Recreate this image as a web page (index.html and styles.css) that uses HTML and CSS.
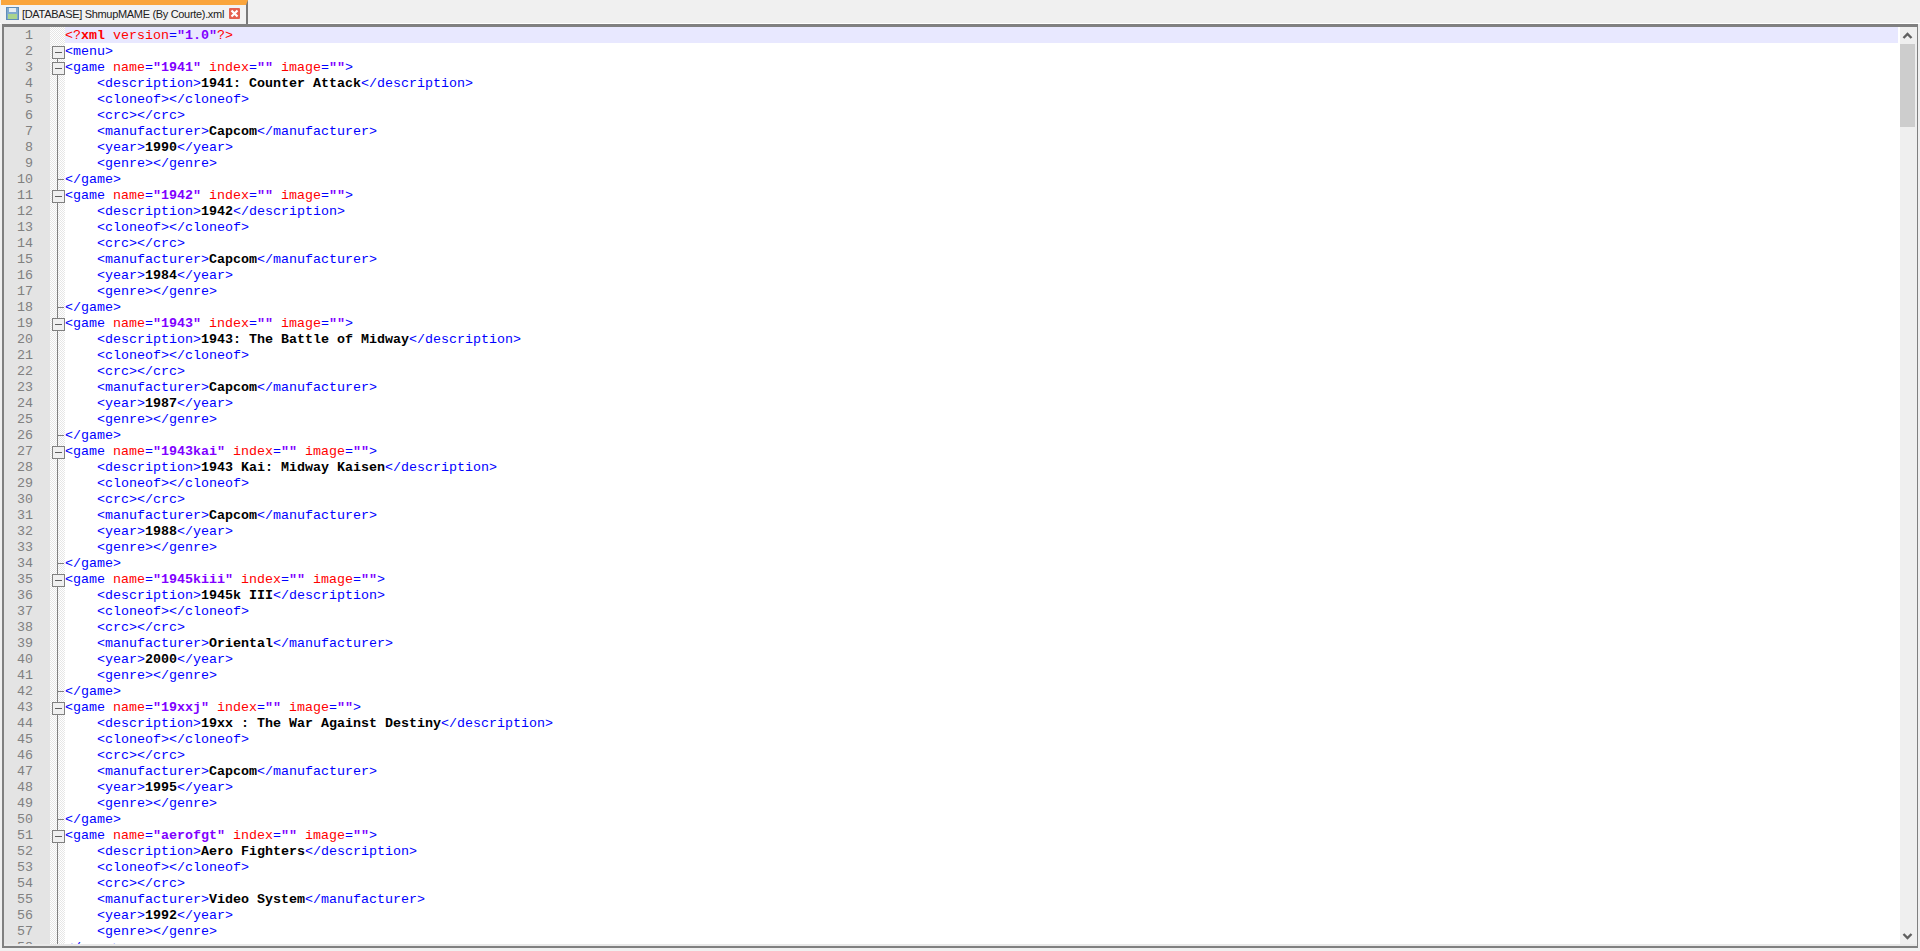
FILE: index.html
```html
<!DOCTYPE html>
<html><head><meta charset="utf-8"><title>ShmupMAME</title><link rel="stylesheet" href="styles.css"></head>
<body>
<div class="tabbar"><div class="tab"><svg class="disk" width="13" height="13" viewBox="0 0 13 13"><rect x="0.5" y="0.5" width="12" height="12" fill="#7fa9cf" stroke="#5f8db8"/><rect x="3" y="1" width="7" height="4" fill="#e6edf3"/><rect x="2" y="7" width="9" height="5" fill="#a9d48d"/></svg><span class="tabname">[DATABASE] ShmupMAME (By Courte).xml</span><svg class="close" width="11" height="11" viewBox="0 0 11 11"><rect width="11" height="11" rx="1" fill="#e5604f"/><path d="M2.5 2.5l6 6M8.5 2.5l-6 6" stroke="#fff" stroke-width="2.2"/></svg></div></div>
<div class="editor"><div class="lines">
<div class="row"><span class="num">1</span><span class="fold none"></span><span class="code cur"><span class="p">&lt;?</span><span class="k">xml</span><span class="a"> version</span><span class="t">=</span><span class="v">"1.0"</span><span class="p">?&gt;</span></span></div>
<div class="row"><span class="num">2</span><span class="fold box first"></span><span class="code"><span class="t">&lt;menu&gt;</span></span></div>
<div class="row"><span class="num">3</span><span class="fold box"></span><span class="code"><span class="t">&lt;game</span><span class="a"> name</span><span class="t">=</span><span class="v">"1941"</span><span class="a"> index</span><span class="t">=</span><span class="v">""</span><span class="a"> image</span><span class="t">=</span><span class="v">""</span><span class="t">&gt;</span></span></div>
<div class="row"><span class="num">4</span><span class="fold"></span><span class="code">    <span class="t">&lt;description&gt;</span><span class="x">1941: Counter Attack</span><span class="t">&lt;/description&gt;</span></span></div>
<div class="row"><span class="num">5</span><span class="fold"></span><span class="code">    <span class="t">&lt;cloneof&gt;&lt;/cloneof&gt;</span></span></div>
<div class="row"><span class="num">6</span><span class="fold"></span><span class="code">    <span class="t">&lt;crc&gt;&lt;/crc&gt;</span></span></div>
<div class="row"><span class="num">7</span><span class="fold"></span><span class="code">    <span class="t">&lt;manufacturer&gt;</span><span class="x">Capcom</span><span class="t">&lt;/manufacturer&gt;</span></span></div>
<div class="row"><span class="num">8</span><span class="fold"></span><span class="code">    <span class="t">&lt;year&gt;</span><span class="x">1990</span><span class="t">&lt;/year&gt;</span></span></div>
<div class="row"><span class="num">9</span><span class="fold"></span><span class="code">    <span class="t">&lt;genre&gt;&lt;/genre&gt;</span></span></div>
<div class="row"><span class="num">10</span><span class="fold end"></span><span class="code"><span class="t">&lt;/game&gt;</span></span></div>
<div class="row"><span class="num">11</span><span class="fold box"></span><span class="code"><span class="t">&lt;game</span><span class="a"> name</span><span class="t">=</span><span class="v">"1942"</span><span class="a"> index</span><span class="t">=</span><span class="v">""</span><span class="a"> image</span><span class="t">=</span><span class="v">""</span><span class="t">&gt;</span></span></div>
<div class="row"><span class="num">12</span><span class="fold"></span><span class="code">    <span class="t">&lt;description&gt;</span><span class="x">1942</span><span class="t">&lt;/description&gt;</span></span></div>
<div class="row"><span class="num">13</span><span class="fold"></span><span class="code">    <span class="t">&lt;cloneof&gt;&lt;/cloneof&gt;</span></span></div>
<div class="row"><span class="num">14</span><span class="fold"></span><span class="code">    <span class="t">&lt;crc&gt;&lt;/crc&gt;</span></span></div>
<div class="row"><span class="num">15</span><span class="fold"></span><span class="code">    <span class="t">&lt;manufacturer&gt;</span><span class="x">Capcom</span><span class="t">&lt;/manufacturer&gt;</span></span></div>
<div class="row"><span class="num">16</span><span class="fold"></span><span class="code">    <span class="t">&lt;year&gt;</span><span class="x">1984</span><span class="t">&lt;/year&gt;</span></span></div>
<div class="row"><span class="num">17</span><span class="fold"></span><span class="code">    <span class="t">&lt;genre&gt;&lt;/genre&gt;</span></span></div>
<div class="row"><span class="num">18</span><span class="fold end"></span><span class="code"><span class="t">&lt;/game&gt;</span></span></div>
<div class="row"><span class="num">19</span><span class="fold box"></span><span class="code"><span class="t">&lt;game</span><span class="a"> name</span><span class="t">=</span><span class="v">"1943"</span><span class="a"> index</span><span class="t">=</span><span class="v">""</span><span class="a"> image</span><span class="t">=</span><span class="v">""</span><span class="t">&gt;</span></span></div>
<div class="row"><span class="num">20</span><span class="fold"></span><span class="code">    <span class="t">&lt;description&gt;</span><span class="x">1943: The Battle of Midway</span><span class="t">&lt;/description&gt;</span></span></div>
<div class="row"><span class="num">21</span><span class="fold"></span><span class="code">    <span class="t">&lt;cloneof&gt;&lt;/cloneof&gt;</span></span></div>
<div class="row"><span class="num">22</span><span class="fold"></span><span class="code">    <span class="t">&lt;crc&gt;&lt;/crc&gt;</span></span></div>
<div class="row"><span class="num">23</span><span class="fold"></span><span class="code">    <span class="t">&lt;manufacturer&gt;</span><span class="x">Capcom</span><span class="t">&lt;/manufacturer&gt;</span></span></div>
<div class="row"><span class="num">24</span><span class="fold"></span><span class="code">    <span class="t">&lt;year&gt;</span><span class="x">1987</span><span class="t">&lt;/year&gt;</span></span></div>
<div class="row"><span class="num">25</span><span class="fold"></span><span class="code">    <span class="t">&lt;genre&gt;&lt;/genre&gt;</span></span></div>
<div class="row"><span class="num">26</span><span class="fold end"></span><span class="code"><span class="t">&lt;/game&gt;</span></span></div>
<div class="row"><span class="num">27</span><span class="fold box"></span><span class="code"><span class="t">&lt;game</span><span class="a"> name</span><span class="t">=</span><span class="v">"1943kai"</span><span class="a"> index</span><span class="t">=</span><span class="v">""</span><span class="a"> image</span><span class="t">=</span><span class="v">""</span><span class="t">&gt;</span></span></div>
<div class="row"><span class="num">28</span><span class="fold"></span><span class="code">    <span class="t">&lt;description&gt;</span><span class="x">1943 Kai: Midway Kaisen</span><span class="t">&lt;/description&gt;</span></span></div>
<div class="row"><span class="num">29</span><span class="fold"></span><span class="code">    <span class="t">&lt;cloneof&gt;&lt;/cloneof&gt;</span></span></div>
<div class="row"><span class="num">30</span><span class="fold"></span><span class="code">    <span class="t">&lt;crc&gt;&lt;/crc&gt;</span></span></div>
<div class="row"><span class="num">31</span><span class="fold"></span><span class="code">    <span class="t">&lt;manufacturer&gt;</span><span class="x">Capcom</span><span class="t">&lt;/manufacturer&gt;</span></span></div>
<div class="row"><span class="num">32</span><span class="fold"></span><span class="code">    <span class="t">&lt;year&gt;</span><span class="x">1988</span><span class="t">&lt;/year&gt;</span></span></div>
<div class="row"><span class="num">33</span><span class="fold"></span><span class="code">    <span class="t">&lt;genre&gt;&lt;/genre&gt;</span></span></div>
<div class="row"><span class="num">34</span><span class="fold end"></span><span class="code"><span class="t">&lt;/game&gt;</span></span></div>
<div class="row"><span class="num">35</span><span class="fold box"></span><span class="code"><span class="t">&lt;game</span><span class="a"> name</span><span class="t">=</span><span class="v">"1945kiii"</span><span class="a"> index</span><span class="t">=</span><span class="v">""</span><span class="a"> image</span><span class="t">=</span><span class="v">""</span><span class="t">&gt;</span></span></div>
<div class="row"><span class="num">36</span><span class="fold"></span><span class="code">    <span class="t">&lt;description&gt;</span><span class="x">1945k III</span><span class="t">&lt;/description&gt;</span></span></div>
<div class="row"><span class="num">37</span><span class="fold"></span><span class="code">    <span class="t">&lt;cloneof&gt;&lt;/cloneof&gt;</span></span></div>
<div class="row"><span class="num">38</span><span class="fold"></span><span class="code">    <span class="t">&lt;crc&gt;&lt;/crc&gt;</span></span></div>
<div class="row"><span class="num">39</span><span class="fold"></span><span class="code">    <span class="t">&lt;manufacturer&gt;</span><span class="x">Oriental</span><span class="t">&lt;/manufacturer&gt;</span></span></div>
<div class="row"><span class="num">40</span><span class="fold"></span><span class="code">    <span class="t">&lt;year&gt;</span><span class="x">2000</span><span class="t">&lt;/year&gt;</span></span></div>
<div class="row"><span class="num">41</span><span class="fold"></span><span class="code">    <span class="t">&lt;genre&gt;&lt;/genre&gt;</span></span></div>
<div class="row"><span class="num">42</span><span class="fold end"></span><span class="code"><span class="t">&lt;/game&gt;</span></span></div>
<div class="row"><span class="num">43</span><span class="fold box"></span><span class="code"><span class="t">&lt;game</span><span class="a"> name</span><span class="t">=</span><span class="v">"19xxj"</span><span class="a"> index</span><span class="t">=</span><span class="v">""</span><span class="a"> image</span><span class="t">=</span><span class="v">""</span><span class="t">&gt;</span></span></div>
<div class="row"><span class="num">44</span><span class="fold"></span><span class="code">    <span class="t">&lt;description&gt;</span><span class="x">19xx : The War Against Destiny</span><span class="t">&lt;/description&gt;</span></span></div>
<div class="row"><span class="num">45</span><span class="fold"></span><span class="code">    <span class="t">&lt;cloneof&gt;&lt;/cloneof&gt;</span></span></div>
<div class="row"><span class="num">46</span><span class="fold"></span><span class="code">    <span class="t">&lt;crc&gt;&lt;/crc&gt;</span></span></div>
<div class="row"><span class="num">47</span><span class="fold"></span><span class="code">    <span class="t">&lt;manufacturer&gt;</span><span class="x">Capcom</span><span class="t">&lt;/manufacturer&gt;</span></span></div>
<div class="row"><span class="num">48</span><span class="fold"></span><span class="code">    <span class="t">&lt;year&gt;</span><span class="x">1995</span><span class="t">&lt;/year&gt;</span></span></div>
<div class="row"><span class="num">49</span><span class="fold"></span><span class="code">    <span class="t">&lt;genre&gt;&lt;/genre&gt;</span></span></div>
<div class="row"><span class="num">50</span><span class="fold end"></span><span class="code"><span class="t">&lt;/game&gt;</span></span></div>
<div class="row"><span class="num">51</span><span class="fold box"></span><span class="code"><span class="t">&lt;game</span><span class="a"> name</span><span class="t">=</span><span class="v">"aerofgt"</span><span class="a"> index</span><span class="t">=</span><span class="v">""</span><span class="a"> image</span><span class="t">=</span><span class="v">""</span><span class="t">&gt;</span></span></div>
<div class="row"><span class="num">52</span><span class="fold"></span><span class="code">    <span class="t">&lt;description&gt;</span><span class="x">Aero Fighters</span><span class="t">&lt;/description&gt;</span></span></div>
<div class="row"><span class="num">53</span><span class="fold"></span><span class="code">    <span class="t">&lt;cloneof&gt;&lt;/cloneof&gt;</span></span></div>
<div class="row"><span class="num">54</span><span class="fold"></span><span class="code">    <span class="t">&lt;crc&gt;&lt;/crc&gt;</span></span></div>
<div class="row"><span class="num">55</span><span class="fold"></span><span class="code">    <span class="t">&lt;manufacturer&gt;</span><span class="x">Video System</span><span class="t">&lt;/manufacturer&gt;</span></span></div>
<div class="row"><span class="num">56</span><span class="fold"></span><span class="code">    <span class="t">&lt;year&gt;</span><span class="x">1992</span><span class="t">&lt;/year&gt;</span></span></div>
<div class="row"><span class="num">57</span><span class="fold"></span><span class="code">    <span class="t">&lt;genre&gt;&lt;/genre&gt;</span></span></div>
<div class="row"><span class="num">58</span><span class="fold end"></span><span class="code"><span class="t">&lt;/game&gt;</span></span></div>
</div><div class="scroll"><svg class="arrow" width="11" height="10" viewBox="0 0 11 10"><path d="M1.5 7l4-4 4 4" fill="none" stroke="#606060" stroke-width="2.4"/></svg><div class="thumb"></div><div class="track"></div><svg class="arrow down" width="11" height="10" viewBox="0 0 11 10"><path d="M1.5 3l4 4 4-4" fill="none" stroke="#606060" stroke-width="2.4"/></svg></div></div>
</body></html>
```

FILE: styles.css
```css
* { box-sizing: border-box; }
html, body { margin: 0; height: 951px; overflow: hidden; background: #f0f0f0; }
body { display: flex; flex-direction: column; }
.tabbar { height: 24px; padding: 0 0 0 1px; flex: none; display: flex; border-bottom: 1px solid #fff; }
.tab { width: 247px; height: 24px; background: #f2f2f2; border-top: 5px solid #faa53c; border-right: 2px solid #7a7a7a; box-shadow: 0 -1px 0 #f0f0f0; display: flex; align-items: center; padding: 0 0 2px 5px; }
.disk { flex: none; }
.tabname { margin-left: 3px; font: 11px "Liberation Sans", sans-serif; letter-spacing: -0.32px; color: #202020; white-space: nowrap; }
.close { margin-left: 5px; flex: none; }
.editor { margin: 0 2px; height: 924px; flex: none; border-style: solid; border-color: #808080; border-width: 3px 1px 2px 2px; padding-bottom: 2px; display: flex; background: #e9e9e9; overflow: hidden; }
.lines { flex: 1; min-width: 0; overflow: hidden; background: #fff; }
.row { display: flex; height: 16px; font: 13.333px/18px "Liberation Mono", monospace; white-space: pre; }
.num { width: 46px; flex: none; background: #e4e4e4; color: #808080; text-align: right; padding-right: 17px; }
.fold { width: 15px; flex: none; position: relative; background: repeating-conic-gradient(#e6e6e6 0 25%, #fff 0 50%) 0 0 / 2px 2px; }
.fold::before { content: ""; position: absolute; left: 7px; width: 1px; background: #808080; top: 0; bottom: 0; }
.fold.none::before { display: none; }
.fold.end::after { content: ""; position: absolute; left: 8px; top: 8px; width: 6px; height: 1px; background: #808080; }
.fold.first::before { top: 8px; }
.fold.box::after { content: ""; position: absolute; left: 2px; top: 3px; width: 11px; height: 11px; border: 1px solid #808080; background: linear-gradient(#606060, #606060) center / 7px 1px no-repeat #f0f0f0; }
.code { flex: 1; margin-right: 2px; overflow: hidden; }
.cur { background: #e8e8ff; }
.t { color: #0000ff; }
.a { color: #ff0000; }
.v { color: #8000ff; font-weight: bold; }
.x { color: #000; font-weight: bold; }
.p { color: #ff0000; }
.k { color: #ff0000; font-weight: bold; }
.scroll { width: 17px; flex: none; background: #efefef; padding-right: 2px; display: flex; flex-direction: column; }
.arrow { margin: 4px 0 3px 2px; flex: none; }
.arrow.down { margin: 0 0 3px 2px; }
.thumb { height: 83px; background: #cdcdcd; flex: none; }
.track { flex: 1; }
```
